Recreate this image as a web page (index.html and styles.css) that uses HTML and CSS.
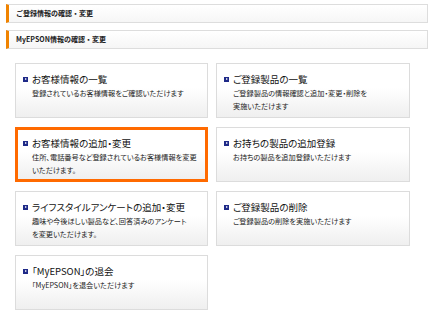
FILE: index.html
```html
<!DOCTYPE html>
<html lang="ja">
<head>
    <meta charset="UTF-8">
    <title>ご登録情報の確認・変更</title>
    <link rel="stylesheet" href="styles.css">
</head>
<body>
    <div class="page">
        <div class="section-head">ご登録情報の確認・変更</div>
        <div class="section-head">MyEPSON情報の確認・変更</div>

        <div class="menu-grid">
            <a class="menu-card" href="#">
                <div class="menu-title"><span class="arrow"></span>お客様情報の一覧</div>
                <p class="menu-desc">登録されているお客様情報をご確認いただけます</p>
            </a>
            <a class="menu-card" href="#">
                <div class="menu-title"><span class="arrow"></span>ご登録製品の一覧</div>
                <p class="menu-desc">ご登録製品の情報確認と追加・変更・削除を<br>実施いただけます</p>
            </a>
            <a class="menu-card current" href="#">
                <div class="menu-title"><span class="arrow"></span>お客様情報の追加・変更</div>
                <p class="menu-desc">住所、電話番号など登録されているお客様情報を変更<br>いただけます。</p>
            </a>
            <a class="menu-card" href="#">
                <div class="menu-title"><span class="arrow"></span>お持ちの製品の追加登録</div>
                <p class="menu-desc">お持ちの製品を追加登録いただけます</p>
            </a>
            <a class="menu-card" href="#">
                <div class="menu-title"><span class="arrow"></span>ライフスタイルアンケートの追加・変更</div>
                <p class="menu-desc">趣味や今後ほしい製品など、回答済みのアンケート<br>を変更いただけます。</p>
            </a>
            <a class="menu-card" href="#">
                <div class="menu-title"><span class="arrow"></span>ご登録製品の削除</div>
                <p class="menu-desc">ご登録製品の削除を実施いただけます</p>
            </a>
            <a class="menu-card" href="#">
                <div class="menu-title"><span class="arrow"></span>「MyEPSON」の退会</div>
                <p class="menu-desc">「MyEPSON」を退会いただけます</p>
            </a>
        </div>
    </div>
</body>
</html>
```

FILE: styles.css
```css
body {
    margin: 0;
    padding: 0;
    background-color: #fff;
    font-family: "Noto Sans CJK JP", "Noto Sans", sans-serif;
    color: #222;
}

.page {
    padding: 4px 6px 0 6px;
    width: 422px;
}

.section-head {
    height: 17px;
    line-height: 17px;
    margin-bottom: 7px;
    padding-left: 7px;
    border: 1px solid #ddd;
    border-left: 3px solid #f08300;
    background: linear-gradient(#fff, #f6f6f6);
    font-size: 7px;
    font-weight: bold;
    color: #222;
}

.menu-grid {
    display: grid;
    grid-template-columns: 193px 194px;
    grid-auto-rows: 55px;
    column-gap: 8px;
    row-gap: 9px;
    margin-top: 14px;
    padding-left: 9px;
}

.menu-card {
    display: block;
    box-sizing: border-box;
    padding: 9px 6px 0 7px;
    border: 1px solid #dcdcdc;
    background: linear-gradient(#fff 45%, #efefef);
    text-decoration: none;
    color: #222;
}

.menu-card.current {
    border: 3px solid #ff6a00;
    padding: 7px 4px 0 5px;
}

.menu-title {
    display: flex;
    align-items: center;
    font-size: 9.5px;
    line-height: 12px;
    color: #111;
    white-space: nowrap;
    font-feature-settings: "palt";
}

.arrow {
    position: relative;
    width: 5px;
    height: 5px;
    margin-right: 4px;
    background-color: #1f2a88;
    flex-shrink: 0;
}

.arrow::after {
    content: "";
    position: absolute;
    left: 2px;
    top: 1px;
    border-left: 2px solid #fff;
    border-top: 1.5px solid transparent;
    border-bottom: 1.5px solid transparent;
}

.menu-desc {
    margin: 2px 0 0 9px;
    font-size: 7.2px;
    line-height: 13px;
    color: #222;
    white-space: nowrap;
    font-feature-settings: "palt";
}
```
